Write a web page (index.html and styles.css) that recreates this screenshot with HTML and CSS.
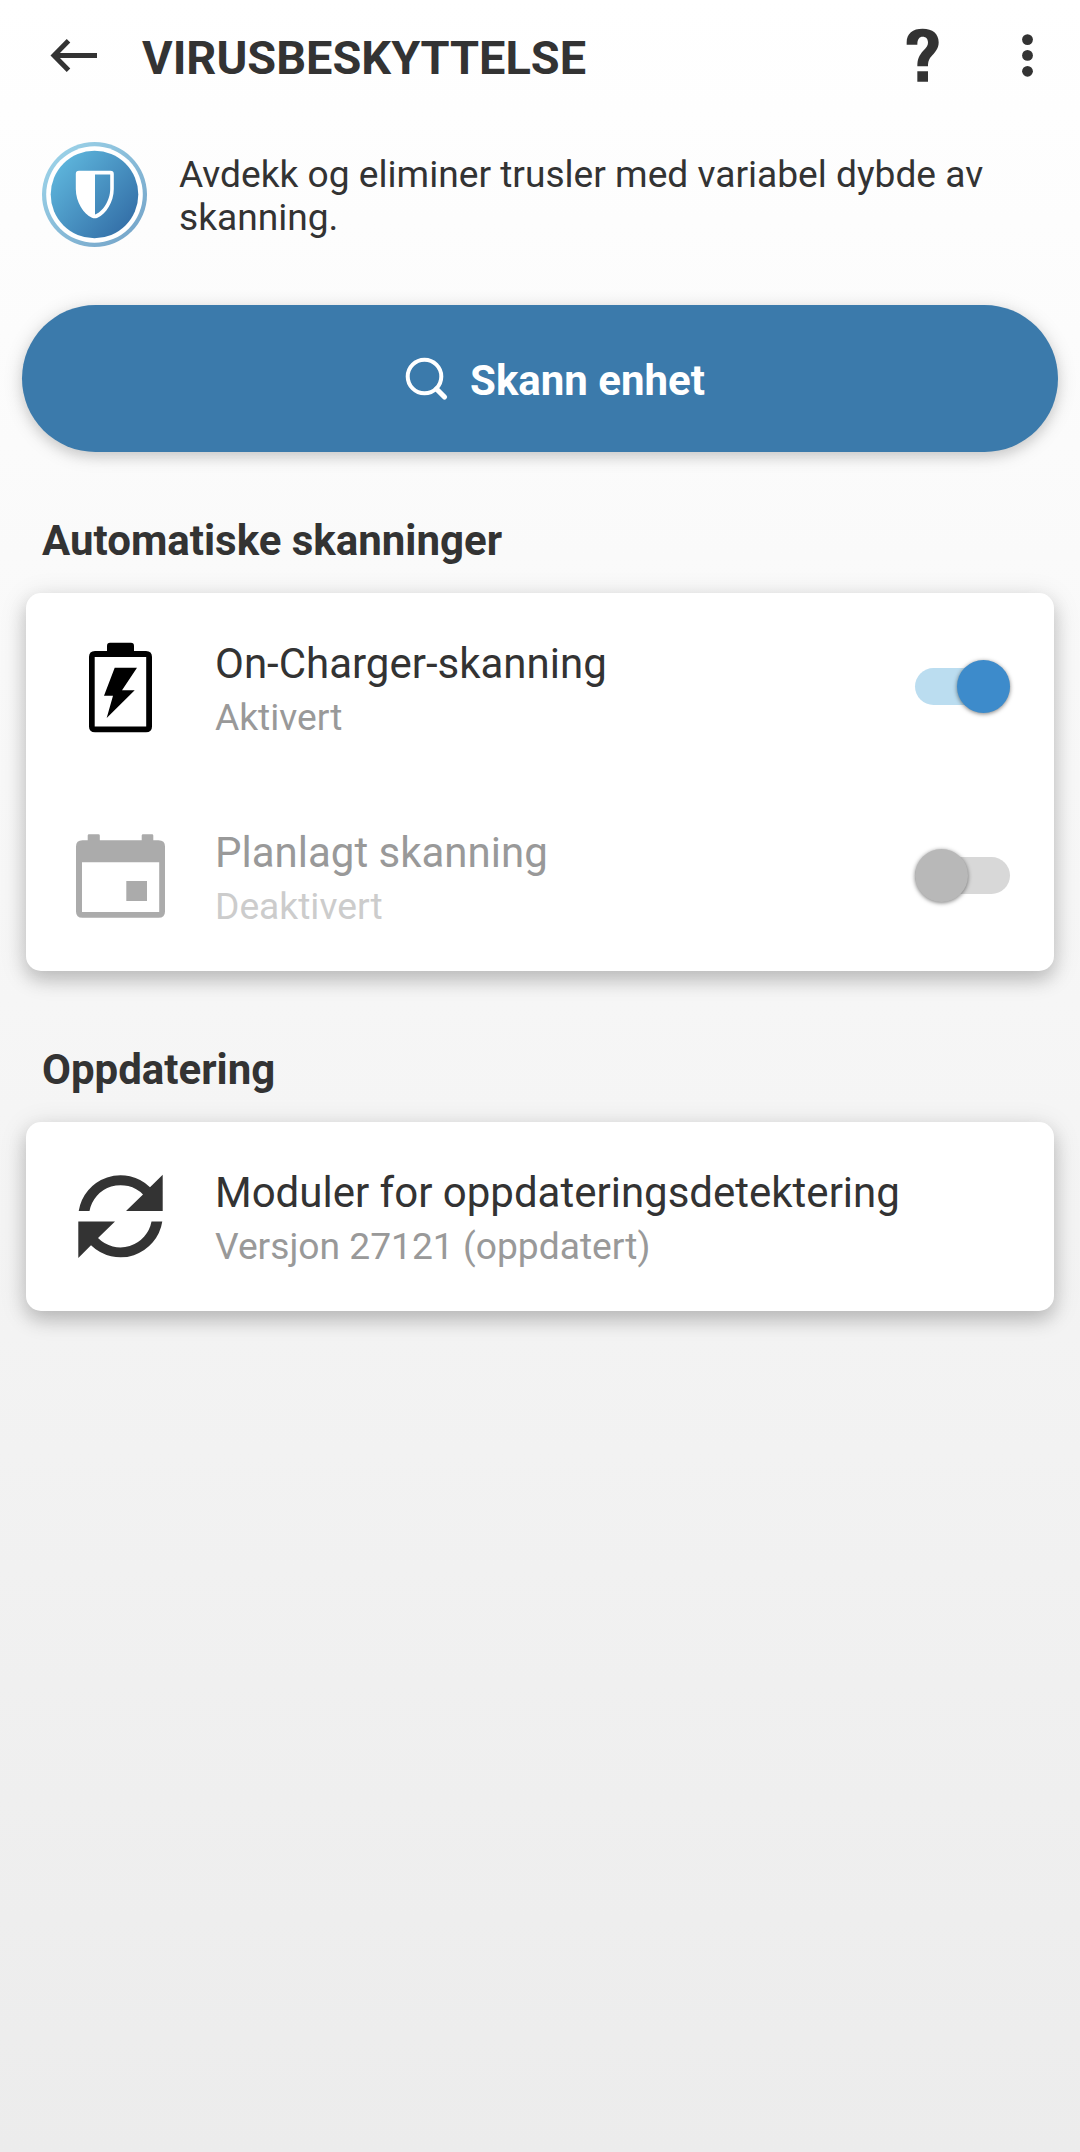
FILE: index.html
```html
<!DOCTYPE html>
<html lang="nb">
<head>
<meta charset="utf-8">
<title>Virusbeskyttelse</title>
<link rel="stylesheet" href="styles.css">
</head>
<body>
<header class="appbar">
  <svg class="back" width="48" height="34" viewBox="0 0 48 34"><path d="M47 17.500H5M18.500 2.800 4 17.500l14.500 14.700" fill="none" stroke="#333" stroke-width="5"/></svg>
  <h1 class="appbar-title">VIRUSBESKYTTELSE</h1>
  <svg class="help" width="34" height="54" viewBox="138 85 102 162"><path fill="#333" d="M140 135V128C140 101 158 87 188 87C218 87 236 102 236 128C236 146 227 156 217 167C208 177 204 184 204 200H172C172 177 178 167 189 154C199 143 204 138 204 129C204 117 198 111 188 111C178 111 172 118 172 135ZM172 215H204V246H172Z"/></svg>
  <svg class="more" width="12" height="44" viewBox="0 0 12 44" fill="#333"><circle cx="5.500" cy="6.600" r="5.400"/><circle cx="5.500" cy="22.400" r="5.400"/><circle cx="5.500" cy="38.300" r="5.400"/></svg>
</header>
<main>
  <section class="intro">
    <svg width="105" height="105" viewBox="0 0 105 105">
      <defs>
        <linearGradient id="disc" x1="0.100" y1="0.150" x2="0.900" y2="0.850"><stop offset="0" stop-color="#5db4db"/><stop offset="1" stop-color="#3470a8"/></linearGradient>
        <linearGradient id="ring" x1="0.100" y1="0.100" x2="0.900" y2="0.900"><stop offset="0" stop-color="#9bd2e8"/><stop offset="1" stop-color="#76a6ca"/></linearGradient>
      </defs>
      <circle cx="52.500" cy="52.500" r="52.500" fill="url(#ring)"/>
      <circle cx="52.500" cy="52.500" r="48.300" fill="#fff"/>
      <circle cx="52.500" cy="52.500" r="43.800" fill="url(#disc)"/>
      <path fill="#fff" fill-rule="evenodd" d="M37 28.700H68.500Q71.800 28.700 71.800 32V47C71.800 60 64 72 55.500 75.700Q52.800 76.800 50 75.700C41.500 72 33.800 60 33.800 47V32Q33.800 28.700 37 28.700ZM53 32.400V72.500C60 70.500 68.200 59 68.200 47V32.400Z"/>
    </svg>
    <p class="intro-text">Avdekk og eliminer trusler med variabel dybde av skanning.</p>
  </section>
  <button class="scan" type="button">
    <svg width="44" height="44" viewBox="0 0 44 44" fill="none" stroke="#fff"><circle cx="19.500" cy="19.500" r="16.800" stroke-width="4"/><path d="M31.500 32 39.500 40" stroke-width="5.200" stroke-linecap="round"/></svg>
    <span class="scan-label">Skann enhet</span>
  </button>

  <h2 class="section-title">Automatiske skanninger</h2>
  <div class="card">
    <div class="row">
      <svg class="row-icon" viewBox="0 0 107 107"><path fill-rule="evenodd" d="M40 17V12Q40 8.700 43 8.700H64Q67 8.700 67 12V17H79Q85 17 85 23V92.500Q85 98.300 79 98.300H28Q22 98.300 22 92.500V23Q22 17 28 17ZM27.700 23V92.500H79.200V23Z"/><path d="M47.700 33.700H70L55 56.300H67.700L39.700 84L46 61.700H37Z"/></svg>
      <div class="row-text">
        <div class="row-title">On-Charger-skanning</div>
        <div class="row-sub">Aktivert</div>
      </div>
      <div class="toggle on"><div class="thumb"></div></div>
    </div>
    <div class="row disabled">
      <svg class="row-icon" viewBox="0 0 107 107" fill="#ababab"><path fill-rule="evenodd" d="M20.700 17.200V12.500Q20.700 11.300 22 11.300H31.500Q32.800 11.300 32.800 12.500V17.200H74.700V12.500Q74.700 11.300 76 11.300H85Q86.300 11.300 86.300 12.500V17.200H91.500Q98 17.200 98 23.500V88.500Q98 94.800 91.500 94.800H15.500Q9 94.800 9 88.500V23.500Q9 17.200 15.500 17.200ZM15 39.300V89H92.200V39.300Z"/><path d="M59.300 58H80V78H59.300Z"/></svg>
      <div class="row-text">
        <div class="row-title">Planlagt skanning</div>
        <div class="row-sub">Deaktivert</div>
      </div>
      <div class="toggle"><div class="thumb"></div></div>
    </div>
  </div>

  <h2 class="section-title">Oppdatering</h2>
  <div class="card">
    <div class="row">
      <svg class="row-icon" viewBox="0 0 107 107" fill="#333"><path id="turn" d="M11.700 48A42.300 42.300 0 0 1 83 24.300L95.700 11.700V48H59L76 31.500A31.600 31.600 0 0 0 22.500 48Z"/><use href="#turn" transform="rotate(180 53.500 53.300)"/></svg>
      <div class="row-text">
        <div class="row-title">Moduler for oppdateringsdetektering</div>
        <div class="row-sub">Versjon 27121 (oppdatert)</div>
      </div>
    </div>
  </div>
</main>
</body>
</html>
```
FILE: styles.css
```css
* { box-sizing: border-box; margin: 0; }
html { min-height: 100%; background: #ececec; }
body {
  min-height: 2152px;
  font-family: Roboto, "Liberation Sans", sans-serif;
  color: #333;
  background: linear-gradient(#fff, #f3f3f3 62%, #ececec);
}
svg { display: block; flex: none; }
.appbar { display: flex; align-items: center; height: 110px; padding: 0 46px 0 50px; }
.appbar-title { flex: 1; margin-left: 44px; padding-top: 5px; font-size: 46.9px; line-height: 60px; font-weight: 700; white-space: nowrap; }
.more { margin-left: 82px; }
.intro { display: flex; height: 195px; padding: 32px 60px 0 42px; }
.intro-text { margin: 11px 0 0 32px; font-size: 37.15px; line-height: 43px; }
.scan {
  display: flex; align-items: center; justify-content: center; gap: 21px;
  width: 1036px; height: 147px; margin: 0 22px; padding: 0 0 0 30px;
  border: 0; border-radius: 74px; background: #3b7aab; color: #fff;
  font: 700 42px/50px Roboto, "Liberation Sans", sans-serif;
  box-shadow: 0 3px 20px rgba(0,0,0,.14), 0 5px 12px rgba(0,0,0,.1);
}
.scan-label { padding-top: 4px; white-space: nowrap; }
.section-title { height: 141px; padding: 64px 42px 0; font-size: 42px; line-height: 50px; font-weight: 700; }
.card {
  margin: 0 26px; border-radius: 15px; background: #fff;
  box-shadow: 0 5px 28px rgba(0,0,0,.13), 0 9px 18px rgba(0,0,0,.17);
}
.card + .section-title { height: 151px; padding-top: 74px; }
.row { display: flex; align-items: center; height: 189px; padding: 0 44px 0 41px; }
.row-icon { width: 107px; height: 107px; }
.row-text { flex: 1; height: 189px; margin-left: 41px; padding-top: 46px; white-space: nowrap; }
.row-title { font-size: 42px; line-height: 50px; }
.row-sub { margin-top: 4px; font-size: 37.2px; line-height: 49px; color: #999; }
.disabled .row-title { color: #999; }
.disabled .row-sub { color: #ccc; }
.toggle { display: flex; align-items: center; width: 95px; height: 37px; margin-bottom: 3px; border-radius: 19px; background: #d8d8d8; }
.toggle.on { justify-content: flex-end; background: #bbddf0; }
.thumb { flex: none; width: 53px; height: 53px; border-radius: 50%; background: #b8b8b8; box-shadow: 0 1px 4px rgba(0,0,0,.5); }
.on .thumb { background: #3d8bcb; }
```
